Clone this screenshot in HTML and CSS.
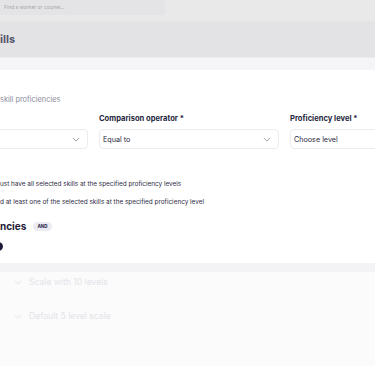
FILE: index.html
```html
<!DOCTYPE html>
<html lang="en">
<head>
<meta charset="utf-8">
<title>Skills filter</title>
<link rel="stylesheet" href="styles.css">
</head>
<body>
<div class="topbar">
  <div class="search">Find a worker or course...</div>
</div>
<div class="header">
  <h1 class="title">ills</h1>
</div>
<div class="panel">
  <div class="panel-top"></div>
  <div class="content">
    <p class="hint">skill proficiencies</p>
    <div class="fields">
      <div class="field">
        <span class="label"></span>
        <div class="select"><span class="value"></span><svg class="chev" viewBox="0 0 10 6"><path d="M1 1l4 4 4-4"/></svg></div>
      </div>
      <div class="field">
        <label class="label">Comparison operator *</label>
        <div class="select"><span class="value">Equal to</span><svg class="chev" viewBox="0 0 10 6"><path d="M1 1l4 4 4-4"/></svg></div>
      </div>
      <div class="field">
        <label class="label">Proficiency level *</label>
        <div class="select"><span class="value">Choose level</span><svg class="chev" viewBox="0 0 10 6"><path d="M1 1l4 4 4-4"/></svg></div>
      </div>
    </div>
    <div class="options">
      <p class="option">ust have all selected skills at the specified proficiency levels</p>
      <p class="option">d at least one of the selected skills at the specified proficiency level</p>
    </div>
    <div class="section">
      <h2 class="section-title">ncies</h2>
      <span class="badge">AND</span>
    </div>
    <div class="dot"></div>
  </div>
  <div class="list">
    <div class="strip"></div>
    <div class="row"><svg class="chev faint" viewBox="0 0 10 6"><path d="M1 1l4 4 4-4"/></svg><span>Scale with 10 levels</span></div>
    <div class="row"><svg class="chev faint" viewBox="0 0 10 6"><path d="M1 1l4 4 4-4"/></svg><span>Default 5 level scale</span></div>
  </div>
</div>
</body>
</html>
```
FILE: styles.css
```css
* { box-sizing: border-box; }
html, body { margin: 0; padding: 0; }
body {
  width: 375px;
  height: 366px;
  overflow: hidden;
  font-family: Inter, "Noto Sans", sans-serif;
  background: #fbfbfc;
}
.topbar {
  height: 22px;
  background: linear-gradient(#e9e9e9 0, #e9e9e9 19px, #e4e4e6 22px);
}
.search {
  width: 165px;
  height: 15px;
  background: #e4e4e6;
  border-radius: 0 0 3px 0;
  font-size: 5px;
  line-height: 15px;
  padding-left: 4px;
  color: #a6a6ae;
}
.header {
  height: 36px;
  background: #e3e3e5;
  border-bottom: 1px solid #ececee;
  display: flex;
  align-items: center;
}
.title {
  margin: 0;
  font-size: 11px;
  font-weight: 700;
  color: #56566a;
  line-height: 14px;
  padding-bottom: 1px;
}
.panel-top { height: 12px; background: #f5f5f7; }
.content {
  background: #ffffff;
  padding: 24px 0 12px 0;
}
.hint {
  margin: 0;
  font-size: 7.4px;
  line-height: 12px;
  color: #8e8e9e;
}
.fields {
  margin: 7px 0 0 -92px;
  display: grid;
  grid-template-columns: 180px 180px 180px;
  column-gap: 11px;
}
.field { display: flex; flex-direction: column; gap: 4px; }
.label {
  display: block;
  height: 12px;
  font-size: 7.6px;
  font-weight: 700;
  line-height: 12px;
  color: #241f3c;
  white-space: nowrap;
}
.select {
  height: 20px;
  border: 1px solid #ececf0;
  border-radius: 4px;
  background: #fff;
  display: flex;
  align-items: center;
  justify-content: space-between;
  padding: 0 7px 0 3px;
}
.value { font-size: 7.2px; color: #2c2842; }
.chev { width: 8px; height: 5px; fill: none; stroke: #8a8a96; stroke-width: 1; }
.options { margin-top: 29px; display: flex; flex-direction: column; gap: 6px; }
.option {
  margin: 0;
  font-size: 6.4px;
  line-height: 12px;
  color: #2e2a44;
  white-space: nowrap;
}
.section {
  margin-top: 11px;
  display: flex;
  align-items: center;
  gap: 7px;
  height: 15px;
}
.section-title {
  margin: 0;
  font-size: 10px;
  font-weight: 700;
  color: #1e1a36;
  line-height: 15px;
}
.badge {
  font-size: 4.5px;
  font-weight: 800;
  color: #3a3556;
  background: #ebebf3;
  border-radius: 5px;
  padding: 0 4px;
  line-height: 9px;
  height: 9px;
}
.dot {
  margin: 8px 0 0 -7px;
  width: 10px;
  height: 9px;
  border-radius: 50%;
  background: #1f1a3a;
}
.list { background: #fbfbfc; }
.strip { height: 9px; background: #f3f3f6; }
.row {
  height: 34px;
  display: flex;
  align-items: flex-start;
  gap: 7px;
  padding: 4px 0 0 14px;
  font-size: 8.6px;
  line-height: 12px;
  color: #e4e4e8;
}
.row .chev { margin-top: 4px; stroke: #e0e0e4; }
```
